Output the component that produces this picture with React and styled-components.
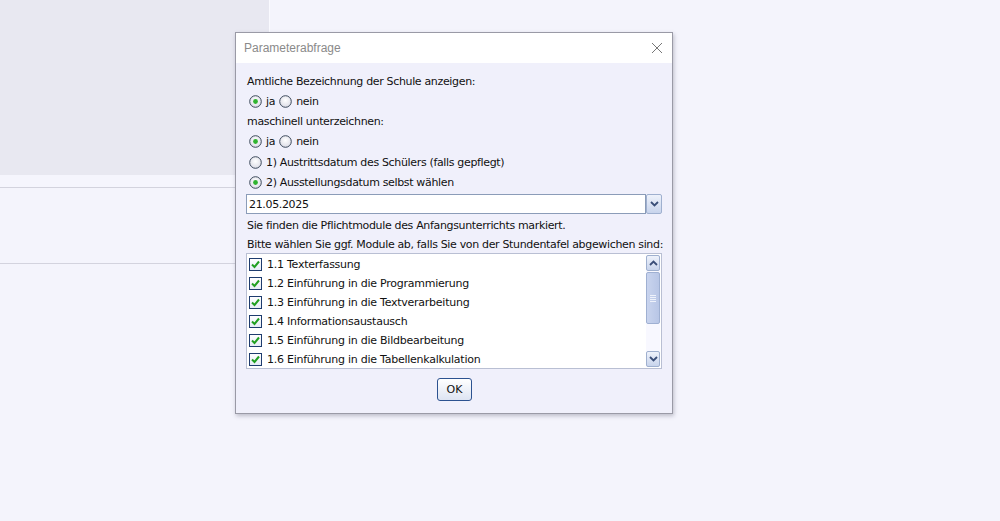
import React from "react";
import styled, { createGlobalStyle } from "styled-components";

const GlobalStyle = createGlobalStyle`
  html, body {
    margin: 0;
    padding: 0;
    background: #f4f4fc;
    font-family: "DejaVu Sans", "Liberation Sans", sans-serif;
  }
  #root {
    width: 1000px;
    height: 521px;
    overflow: hidden;
  }
`;

const modules = [
  "1.1 Texterfassung",
  "1.2 Einführung in die Programmierung",
  "1.3 Einführung in die Textverarbeitung",
  "1.4 Informationsaustausch",
  "1.5 Einführung in die Bildbearbeitung",
  "1.6 Einführung in die Tabellenkalkulation",
];

function Radio({ checked }) {
  return (
    <RadioCircle>
      <svg width="13" height="13" viewBox="0 0 13 13">
        <defs>
          <radialGradient id="rg" cx="50%" cy="40%" r="60%">
            <stop offset="0%" stopColor="#ffffff" />
            <stop offset="100%" stopColor="#dcdce6" />
          </radialGradient>
        </defs>
        <circle cx="6.5" cy="6.5" r="5.8" fill="url(#rg)" stroke="#3d4a5c" strokeWidth="1" />
        {checked && <circle cx="6.5" cy="6.5" r="2.4" fill="#2fb32f" />}
      </svg>
    </RadioCircle>
  );
}

function Check() {
  return (
    <CheckBox>
      <svg width="9" height="9" viewBox="0 0 9 9">
        <path d="M1 4.5 L3.5 7 L8 1.5" fill="none" stroke="#21a021" strokeWidth="2" />
      </svg>
    </CheckBox>
  );
}

function App() {
  return (
    <Page>
      <GlobalStyle />
      <LeftPane>
        <TopPanel />
        <Strip />
        <Section />
      </LeftPane>

      <Dialog>
        <TitleBar>
          <Title>Parameterabfrage</Title>
          <CloseBtn>
            <svg width="12" height="12" viewBox="0 0 12 12">
              <path d="M1 1 L11 11 M11 1 L1 11" stroke="#777" strokeWidth="1" />
            </svg>
          </CloseBtn>
        </TitleBar>
        <Body>
          <Row>Amtliche Bezeichnung der Schule anzeigen:</Row>
          <Row>
            <Radio checked />
            <RadioText>ja</RadioText>
            <Radio />
            <RadioText>nein</RadioText>
          </Row>
          <Row>maschinell unterzeichnen:</Row>
          <Row>
            <Radio checked />
            <RadioText>ja</RadioText>
            <Radio />
            <RadioText>nein</RadioText>
          </Row>
          <Row $top={1}>
            <Radio />
            <RadioText>1) Austrittsdatum des Schülers (falls gepflegt)</RadioText>
          </Row>
          <Row>
            <Radio checked />
            <RadioText>2) Ausstellungsdatum selbst wählen</RadioText>
          </Row>
          <Combo>
            <ComboField>21.05.2025</ComboField>
            <ArrowBtn $w={16}>
              <svg width="9" height="6" viewBox="0 0 9 6">
                <path d="M1 1 L4.5 4.5 L8 1" fill="none" stroke="#3a4e78" strokeWidth="1.8" />
              </svg>
            </ArrowBtn>
          </Combo>
          <Row $top={1}>Sie finden die Pflichtmodule des Anfangsunterrichts markiert.</Row>
          <Row $h={18}>Bitte wählen Sie ggf. Module ab, falls Sie von der Stundentafel abgewichen sind:</Row>
          <ListBox>
            <Items>
              {modules.map((m) => (
                <Item key={m}>
                  <Check />
                  <span>{m}</span>
                </Item>
              ))}
            </Items>
            <ScrollBar>
              <ArrowBtn $w={14} $h={16}>
                <svg width="9" height="6" viewBox="0 0 9 6">
                  <path d="M1 5 L4.5 1.5 L8 5" fill="none" stroke="#3a4e78" strokeWidth="1.8" />
                </svg>
              </ArrowBtn>
              <Track>
                <Thumb>
                  <Grip />
                  <Grip />
                  <Grip />
                  <Grip />
                </Thumb>
              </Track>
              <ArrowBtn $w={14} $h={16}>
                <svg width="9" height="6" viewBox="0 0 9 6">
                  <path d="M1 1 L4.5 4.5 L8 1" fill="none" stroke="#3a4e78" strokeWidth="1.8" />
                </svg>
              </ArrowBtn>
            </ScrollBar>
          </ListBox>
          <Footer>
            <OkButton>OK</OkButton>
          </Footer>
        </Body>
      </Dialog>
    </Page>
  );
}

export default App;

const Page = styled.div`
  position: relative;
  width: 1000px;
  height: 521px;
  background: #f4f4fc;
`;

const LeftPane = styled.div`
  width: 270px;
  display: flex;
  flex-direction: column;
`;

const TopPanel = styled.div`
  height: 175px;
  background: #e8e8f1;
  border-right: 1px solid #fafaff;
`;

const Strip = styled.div`
  height: 12px;
  border-bottom: 1px solid #d3d3de;
  background: #f5f5fd;
`;

const Section = styled.div`
  height: 75px;
  border-bottom: 1px solid #d3d3de;
`;

const Dialog = styled.div`
  position: absolute;
  left: 235px;
  top: 32px;
  width: 436px;
  height: 380px;
  border: 1px solid #9a9aa6;
  background: #f0f0fb;
  box-shadow: 1px 2px 4px rgba(90, 90, 110, 0.35);
  display: flex;
  flex-direction: column;
`;

const TitleBar = styled.div`
  height: 30px;
  background: #ffffff;
  display: flex;
  align-items: center;
  justify-content: space-between;
  padding: 0 9px 0 8px;
`;

const Title = styled.span`
  font-family: "Liberation Sans", Arial, sans-serif;
  font-size: 12px;
  color: #8a8a8a;
`;

const CloseBtn = styled.span`
  display: flex;
  align-items: center;
`;

const Body = styled.div`
  display: flex;
  flex-direction: column;
  padding: 8px 10px 0 10px;
  font-size: 11px;
  letter-spacing: -0.34px;
  color: #111;
`;

const Row = styled.div`
  height: ${(p) => p.$h || 20}px;
  margin-top: ${(p) => p.$top || 0}px;
  display: flex;
  align-items: center;
  padding-left: 1px;
  white-space: nowrap;
`;

const RadioCircle = styled.span`
  display: inline-flex;
  width: 13px;
  height: 13px;
  margin: 0 4px 0 2px;
`;

const RadioText = styled.span`
  margin-right: 2px;
`;

const Combo = styled.div`
  margin-top: 2px;
  height: 20px;
  display: flex;
`;

const ComboField = styled.div`
  flex: 1;
  background: #fff;
  border: 1px solid #8b9cb8;
  display: flex;
  align-items: center;
  padding-left: 2px;
`;

const ArrowBtn = styled.div`
  width: ${(p) => p.$w}px;
  height: ${(p) => p.$h || 20}px;
  box-sizing: border-box;
  border: 1px solid #9fb0cf;
  border-radius: 2px;
  background: linear-gradient(#eef2fb, #c8d4ec);
  display: flex;
  align-items: center;
  justify-content: center;
  flex-shrink: 0;
`;

const ListBox = styled.div`
  height: 114px;
  background: #fff;
  border: 1px solid #b9bfd3;
  display: flex;
`;

const Items = styled.div`
  flex: 1;
  padding-top: 1px;
`;

const Item = styled.div`
  height: 19px;
  display: flex;
  align-items: center;
  padding-left: 2px;
  gap: 5px;
  white-space: nowrap;
  letter-spacing: -0.25px;
`;

const CheckBox = styled.span`
  width: 11px;
  height: 11px;
  border: 1px solid #1e3c6e;
  background: linear-gradient(#ffffff, #e6ecf6);
  display: inline-flex;
  align-items: center;
  justify-content: center;
`;

const ScrollBar = styled.div`
  width: 14px;
  margin: 1px 1px 1px 0;
  display: flex;
  flex-direction: column;
  background: #f8f8ff;
`;

const Track = styled.div`
  flex: 1;
  padding: 1px 0 0;
`;

const Thumb = styled.div`
  height: 52px;
  box-sizing: border-box;
  border: 1px solid #9fb0d2;
  border-radius: 2px;
  background: linear-gradient(90deg, #c9d4ee, #b8c6e6);
  display: flex;
  flex-direction: column;
  align-items: center;
  justify-content: center;
  gap: 1px;
`;

const Grip = styled.span`
  width: 6px;
  height: 1px;
  background: #eef2fb;
`;

const Footer = styled.div`
  display: flex;
  justify-content: center;
  padding-top: 9px;
`;

const OkButton = styled.button`
  width: 35px;
  height: 23px;
  font-family: "DejaVu Sans", "Liberation Sans", sans-serif;
  font-size: 11px;
  color: #111;
  border: 1px solid #2c5290;
  border-radius: 3px;
  background: linear-gradient(#ffffff, #dde4f2);
  padding: 0;
  margin-left: 1px;
`;
